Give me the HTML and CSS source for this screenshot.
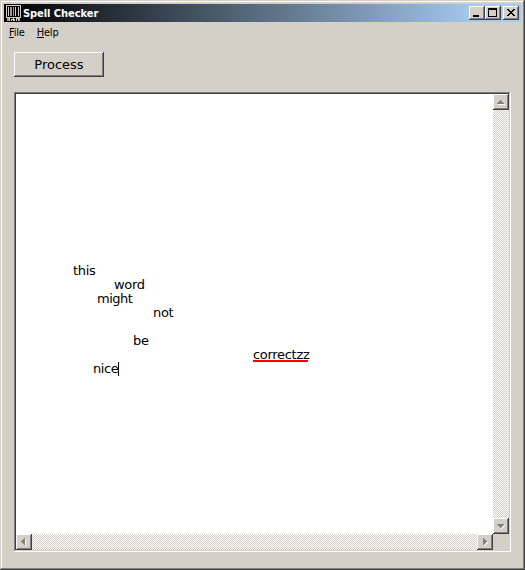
FILE: index.html
```html
<!DOCTYPE html>
<html lang="en">
<head>
<meta charset="utf-8">
<title>Spell Checker</title>
<link rel="stylesheet" href="styles.css">
</head>
<body>
<div class="window">
  <header class="titlebar">
    <svg class="app-icon" width="16" height="16" viewBox="0 0 16 16" shape-rendering="crispEdges">
      <path fill="#d4d0c8" d="M0 0h15v1H0zM0 1h1v12H0zM14 1h1v12h-1zM2 2h1v9H2zM9 2h1v9H9zM12 2h1v9h-1zM0 12h15v1H0z"/>
      <path fill="#999" d="M4 2h2v9H4zM7 2h1v9H7zM1 13h13v3H1z"/>
      <path fill="#d4d0c8" d="M3 12h10v4H3z"/>
      <path fill="#000" d="M4 13h3v1H4zM4 13h1v3H4zM6 15h1v1H6zM8 13h2v1H8zM9 14h1v2H9zM11 14h1v2h-1z"/>
    </svg>
    <span class="title">Spell Checker</span>
    <div class="controls">
      <button class="raised control" aria-label="Minimize"><svg width="12" height="10" shape-rendering="crispEdges"><path d="M2 7h6v2H2z"/></svg></button>
      <button class="raised control" aria-label="Maximize"><svg width="12" height="10" shape-rendering="crispEdges"><path fill-rule="evenodd" d="M1 0h9v9H1zM2 2v6h7V2z"/></svg></button>
      <button class="raised control close" aria-label="Close"><svg width="12" height="10" shape-rendering="crispEdges"><path d="M2 1h2v1h1v1h2V2h1V1h2v1H9v1H8v1H7v1h1v1h1v1h1v1H8V7H7V6H5v1H4v1H2V7h1V6h1V5h1V4H4V3H3V2H2z"/></svg></button>
    </div>
  </header>
  <nav class="menu"><span><u>F</u>ile</span><span><u>H</u>elp</span></nav>
  <main class="content">
    <button class="raised process">Process</button>
    <section class="editor">
      <div class="text">
        <p class="line this">this</p>
        <p class="line word">word</p>
        <p class="line might">might</p>
        <p class="line not">not</p>
        <p class="line"></p>
        <p class="line be">be</p>
        <p class="line correct"><span class="misspelled">correctzz</span></p>
        <p class="line nice">nice<span class="caret"></span></p>
      </div>
      <div class="track vertical">
        <button class="raised arrow" aria-label="Up"><svg width="12" height="12" shape-rendering="crispEdges"><path fill="#fff" d="M3 8h7v1H3z"/><path fill="#808080" d="M5 4h1v1h1v1h1v1h1v1H2V7h1V6h1V5h1z"/></svg></button>
        <button class="raised arrow" aria-label="Down"><svg width="12" height="12" shape-rendering="crispEdges"><path fill="#fff" d="M9 5h1v1H9v1H8v1H7v1H6V8h1V7h1V6h1z"/><path fill="#808080" d="M2 4h7v1H8v1H7v1H6v1H5V7H4V6H3V5H2z"/></svg></button>
      </div>
      <div class="track horizontal">
        <button class="raised arrow" aria-label="Left"><svg width="12" height="12" shape-rendering="crispEdges"><path fill="#fff" d="M7 3h1v7H7z"/><path fill="#808080" d="M6 2h1v7H6V8H5V7H4V6H3V5h1V4h1V3h1z"/></svg></button>
        <button class="raised arrow" aria-label="Right"><svg width="12" height="12" shape-rendering="crispEdges"><path fill="#fff" d="M8 6h1v1H8v1H7v1H6v1H5V9h1V8h1V7h1z"/><path fill="#808080" d="M4 2h1v1h1v1h1v1h1v1H7v1H6v1H5v1H4z"/></svg></button>
      </div>
    </section>
  </main>
</div>
</body>
</html>
```
FILE: styles.css
```css
* { box-sizing: border-box; }
body { margin: 0; font-family: "DejaVu Sans", sans-serif; color: #000; }
button { padding: 0; margin: 0; border: 0; font: inherit; color: #000; }
svg { display: block; }
.window {
  width: 525px; height: 570px; padding: 4px; background: #d4d0c8;
  box-shadow: inset -1px -1px #404040, inset 1px 1px #d4d0c8, inset -2px -2px #808080, inset 2px 2px #fff;
}
.raised {
  background: #d4d0c8;
  box-shadow: inset -1px -1px #404040, inset 1px 1px #fff, inset -2px -2px #808080;
}
.titlebar {
  height: 18px; display: flex; align-items: center; padding: 0 2px;
  background: linear-gradient(to right, #000, #a6caf0 92%);
}
.app-icon { flex: none; background: #000; }
.title {
  flex: 1; margin-left: 1px; padding-top: 1px; color: #fff; white-space: nowrap;
  font: bold 11px/18px "DejaVu Sans Condensed", "DejaVu Sans", sans-serif; font-stretch: condensed; letter-spacing: -0.05px;
}
.controls { display: flex; }
.control { width: 16px; height: 14px; padding: 2px; }
.close { margin-left: 2px; }
.menu {
  height: 19px; display: flex; gap: 12px; padding-left: 5px;
  font: 11px/22px "DejaVu Sans Condensed", "DejaVu Sans", sans-serif; font-stretch: condensed; letter-spacing: -0.2px;
}
.content { padding: 11px 10px 0; }
.process { display: block; width: 90px; height: 25px; font-size: 13px; line-height: 25px; letter-spacing: 0; }
.editor {
  width: 497px; height: 460px; margin-top: 15px; padding: 2px;
  display: grid; grid-template: 440px 16px / 477px 16px;
  box-shadow: inset -1px -1px #fff, inset 1px 1px #808080, inset -2px -2px #d4d0c8, inset 2px 2px #404040;
}
.text { background: #fff; padding-top: 170px; }
.line { margin: 0; height: 14px; font-size: 13px; line-height: 14px; letter-spacing: -0.3px; white-space: nowrap; }
.this { padding-left: 57px; }
.word { padding-left: 98px; }
.might { padding-left: 81px; letter-spacing: -0.5px; }
.not { padding-left: 137px; }
.be { padding-left: 117px; }
.correct { padding-left: 237px; }
.nice { padding-left: 77px; display: flex; letter-spacing: -0.4px; }
.misspelled { display: block; width: 55px; height: 14px; background: linear-gradient(#f00, #f00) 0 12px / 55px 2px no-repeat; }
.caret { width: 1px; height: 14px; background: #000; }
.track {
  display: flex; justify-content: space-between;
  background: repeating-conic-gradient(#fff 0 25%, #d4d0c8 0 50%) 0 0 / 2px 2px;
}
.vertical { flex-direction: column; }
.arrow { width: 16px; height: 16px; padding: 2px; }
```
